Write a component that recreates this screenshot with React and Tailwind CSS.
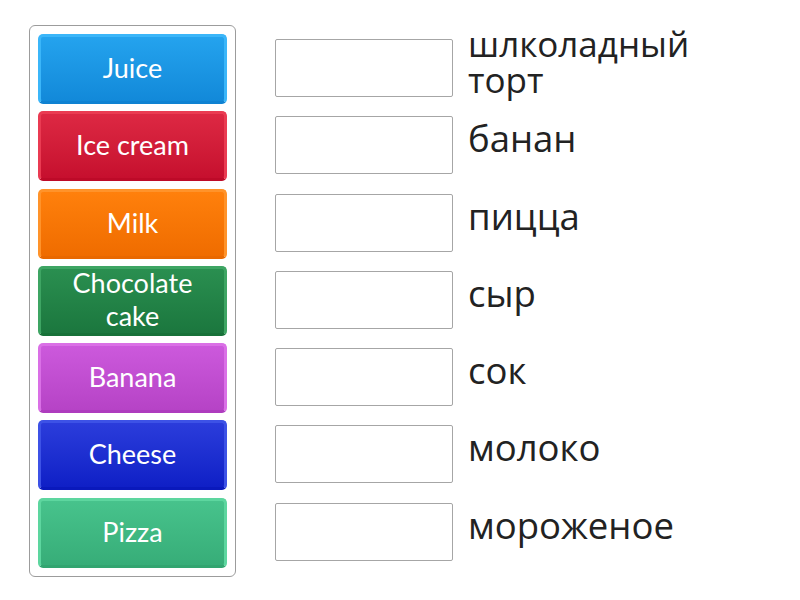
const tiles = [
  { label: "Juice", cls: "bg-gradient-to-b from-[#24a3ee] to-[#1289d9] border-[#3bb6f9] border-b-[#0f82d2]" },
  { label: "Ice cream", cls: "bg-gradient-to-b from-[#dd2843] to-[#c60f2e] border-[#ea3b52] border-b-[#bd0a28]" },
  { label: "Milk", cls: "bg-gradient-to-b from-[#ff800c] to-[#ef6c00] border-[#ff932a] border-b-[#e86800]" },
  { label: "Chocolate cake", cls: "bg-gradient-to-b from-[#2a8f50] to-[#1b773e] border-[#3ea563] border-b-[#177138]" },
  { label: "Banana", cls: "bg-gradient-to-b from-[#cc59dc] to-[#b643c6] border-[#da70e6] border-b-[#ae3cbe]" },
  { label: "Cheese", cls: "bg-gradient-to-b from-[#2b3cdb] to-[#0f1fc6] border-[#3d52e6] border-b-[#0a19bc]" },
  { label: "Pizza", cls: "bg-gradient-to-b from-[#47c38c] to-[#37ad78] border-[#5dd69f] border-b-[#32a570]" },
];

const words = ["шлколадный торт", "банан", "пицца", "сыр", "сок", "молоко", "мороженое"];

export default function App() {
  return (
    <main className="w-[800px] h-[600px] bg-white flex items-start pt-[25px] pl-[29px]">
      {/* draggable tiles */}
      <div className="w-[207px] border border-[#9c9c9c] rounded-[6px] p-[8px] flex flex-col gap-[7.3px]">
        {tiles.map((t) => (
          <div
            key={t.label}
            className={`h-[70px] rounded-[5px] border-[3px] flex items-center justify-center text-center text-white text-[27px] leading-[33px] px-2 pb-[3px] ${t.cls}`}
            style={{ fontFamily: "Lato, 'Open Sans', sans-serif" }}
          >
            {t.label}
          </div>
        ))}
      </div>

      {/* answer boxes */}
      <div className="ml-[39px] mt-[14px] flex flex-col gap-[19.3px]">
        {words.map((w, i) => (
          <div key={w} className="h-[58px] flex items-start">
            <div className="w-[178px] h-[58px] border border-[#a6a6a6] rounded-[2px] bg-white shrink-0" />
            {i === 0 ? (
              <div
                className="ml-[15px] -mt-[13px] w-[260px] text-[35px] leading-[36px] text-[#222]"
                style={{ fontFamily: "'Open Sans', sans-serif" }}
              >
                {w}
              </div>
            ) : (
              <div
                className="ml-[15px] -mt-[2px] text-[36.5px] leading-[49px] text-[#222]"
                style={{ fontFamily: "'Open Sans', sans-serif" }}
              >
                {w}
              </div>
            )}
          </div>
        ))}
      </div>
    </main>
  );
}
